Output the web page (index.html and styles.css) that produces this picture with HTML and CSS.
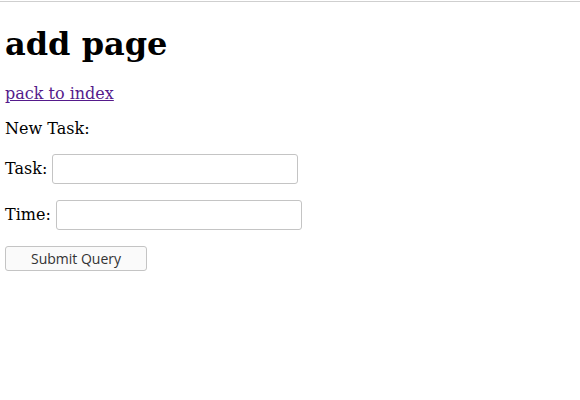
FILE: index.html
```html
<!DOCTYPE html>
<html>
<head>
<meta charset="utf-8">
<title>add page</title>
<link rel="stylesheet" href="styles.css">
</head>
<body>
<div class="page">
<h1 class="title">add page</h1>
<p class="row"><a href="#" class="back">pack to index</a></p>
<form class="form">
<p class="row">New Task:</p>
<p class="row"><label>Task: <input type="text" class="field"></label></p>
<p class="row"><label>Time: <input type="text" class="field"></label></p>
<p class="row"><input type="submit" class="submit" value="Submit Query"></p>
</form>
</div>
</body>
</html>
```
FILE: styles.css
```css
html, body {
  margin: 0;
  padding: 0;
  background: #fff;
}
body {
  font-family: "DejaVu Serif", serif;
  font-size: 16px;
  color: #000;
}
.page {
  border-top: 1px solid #cfcfcf;
  margin-top: 1px;
  padding: 2px 5px 0 5px;
}
.title {
  font-size: 32px;
  font-weight: bold;
  margin: 21px 0 21px 0;
}
.row {
  margin: 16px 0;
}
.form {
  margin: 0;
}
.back {
  color: #551a8b;
}
.field {
  width: 246px;
  height: 30px;
  box-sizing: border-box;
  border: 1px solid #c4c4c4;
  border-radius: 3px;
  padding: 2px 4px;
  vertical-align: middle;
  font-size: 13px;
  background: #fff;
}
.submit {
  width: 142px;
  height: 25px;
  box-sizing: border-box;
  border: 1px solid #c4c4c4;
  border-radius: 3px;
  background: #fafafa;
  color: #333;
  font-family: "Open Sans", "DejaVu Sans", sans-serif;
  font-size: 14px;
  padding: 0;
}
```
